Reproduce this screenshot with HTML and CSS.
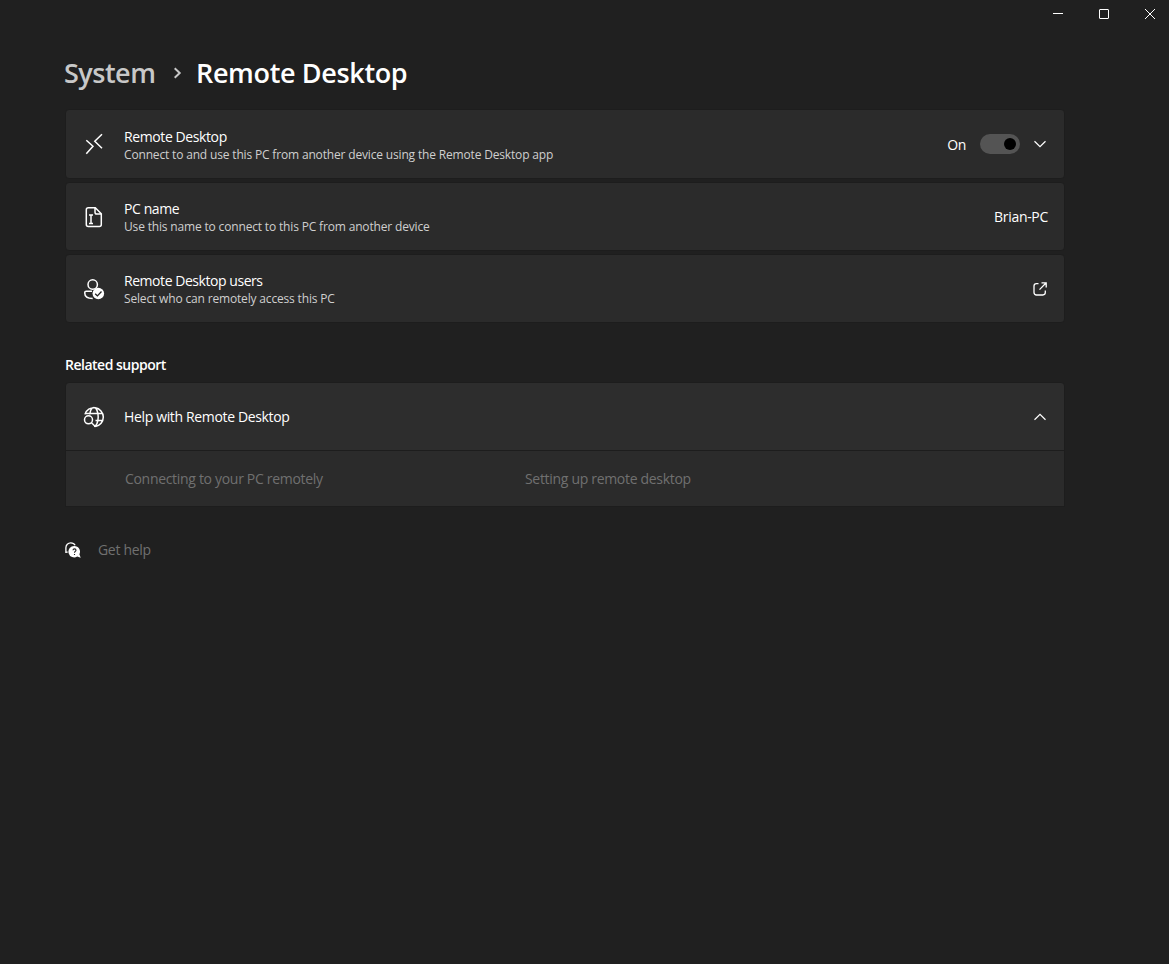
FILE: index.html
```html
<!DOCTYPE html>
<html lang="en">
<head>
<meta charset="utf-8">
<title>Remote Desktop</title>
<link rel="stylesheet" href="styles.css">
</head>
<body>
<header class="titlebar">
  <button class="caption" aria-label="Minimize"><svg width="12" height="12" viewBox="0 0 12 12"><path d="M1 5.5h10"/></svg></button>
  <button class="caption" aria-label="Maximize"><svg width="12" height="12" viewBox="0 0 12 12"><rect x="1.5" y="1.5" width="9" height="9" rx=".5"/></svg></button>
  <button class="caption" aria-label="Close"><svg width="12" height="12" viewBox="0 0 12 12"><path d="M1 1l10 10M11 1L1 11"/></svg></button>
</header>
<main class="page">
  <h1 class="breadcrumb">
    <span class="parent">System</span>
    <svg class="sep" width="10" height="14" viewBox="0 0 10 14"><path d="M2.700 2.200L7.700 7l-5 4.800"/></svg>
    <span class="current">Remote Desktop</span>
  </h1>
  <section class="cards">
    <div class="card tall">
      <svg class="icon" width="24" height="24" viewBox="0 0 24 24"><path d="M4.300 8.200L11 14.300 4.300 21.800M20 2.300L12.800 9.300 20 16.200"/></svg>
      <div class="labels"><div class="title">Remote Desktop</div><div class="desc">Connect to and use this PC from another device using the Remote Desktop app</div></div>
      <span class="state">On</span>
      <span class="toggle"><span class="knob"></span></span>
      <svg class="chevron" width="14" height="14" viewBox="0 0 14 14"><path d="M1.500 4.300L7 9.700l5.500-5.400"/></svg>
    </div>
    <div class="card">
      <svg class="icon" width="24" height="24" viewBox="0 0 24 24"><path d="M6.300 2.700h7l6 6v10.800a2 2 0 0 1-2 2h-11a2 2 0 0 1-2-2V4.700a2 2 0 0 1 2-2zM13 2.900v4.300a1.800 1.800 0 0 0 1.800 1.800h4.300M7 10h4M7 18.500h4M9 10v8.500"/></svg>
      <div class="labels"><div class="title">PC name</div><div class="desc">Use this name to connect to this PC from another device</div></div>
      <span class="value">Brian-PC</span>
    </div>
    <div class="card">
      <svg class="icon" width="24" height="24" viewBox="0 0 24 24"><circle cx="10.700" cy="7.500" r="4.700"/><path d="M10 14.200H4.200c-1 0-1.500.7-1.500 1.600 0 3.600 3.300 5.700 8 5.700"/><circle class="solid" cx="16.300" cy="16.500" r="5.800"/><path class="cut" d="M13.200 16.700l2.200 2.200 4.100-4.400"/></svg>
      <div class="labels"><div class="title users">Remote Desktop users</div><div class="desc">Select who can remotely access this PC</div></div>
      <svg class="open" width="14" height="14" viewBox="0 0 14 14"><path d="M5.500 1.600H3.400A2.400 2.400 0 0 0 1 4v6.600A2.400 2.400 0 0 0 3.400 13h6.500a2.400 2.400 0 0 0 2.400-2.400V8.500M8.500.8h4.700v4.700M13 1L6.500 7.600"/></svg>
    </div>
  </section>
  <h2 class="subhead">Related support</h2>
  <section class="expander">
    <div class="card head">
      <svg class="icon" width="24" height="24" viewBox="0 0 24 24"><path d="M2.900 9.400a9.400 9.400 0 1 1 10.500 12M3.500 8.400h17.200M13.500 15.600h7.200M7.800 9.500c.5-4.200 2.200-6.900 4.200-6.900 2.400 0 4.200 4.200 4.200 9.400s-1.800 9.400-4.200 9.400"/><circle cx="6.500" cy="14.800" r="4"/><path d="M9.500 17.800l4 4"/></svg>
      <div class="labels"><div class="title">Help with Remote Desktop</div></div>
      <svg class="chevron" width="14" height="14" viewBox="0 0 14 14"><path d="M1.500 9.700L7 4.300l5.500 5.400"/></svg>
    </div>
    <div class="links"><a>Connecting to your PC remotely</a><a>Setting up remote desktop</a></div>
  </section>
  <div class="gethelp">
    <svg class="helpicon" width="16" height="16" viewBox="0 0 16 16"><path class="line" d="M.9 11V5.800C.9 2.800 3 .8 5.800.8c2 0 3.500.9 4.300 2.500M.5 10.200h2.200"/><path class="solid" d="M9.400 4a5.700 5.700 0 0 1 5 8.300l1.300 3.400-3.500-1.200A5.700 5.700 0 1 1 9.400 4z"/><path class="cut" d="M8 8.300c0-2 3-1.900 3-.1 0 1.200-1.500 1.200-1.500 2.500M9.500 11.900v1.100"/></svg>
    <a>Get help</a>
  </div>
</main>
</body>
</html>
```
FILE: styles.css
```css
* { box-sizing: border-box; }
body {
  margin: 0;
  min-height: 964px;
  background: #202020;
  color: #fff;
  font: 14px/20px "Open Sans", "Noto Sans", sans-serif;
  letter-spacing: -.31px;
}
svg { display: block; flex: none; fill: none; stroke: #fff; }
.titlebar { display: flex; justify-content: flex-end; height: 28px; margin-right: -4px; }
.caption { width: 46px; padding: 0; border: 0; background: none; display: grid; place-items: center; }
.page { width: 1000px; margin-left: 65px; }
.breadcrumb {
  display: flex; align-items: center; height: 36px; margin: 27px 0 18px;
  font-size: 27px; line-height: 36px; font-weight: 600;
}
.parent { width: 91px; margin-left: -1px; color: #c8c8c8; white-space: nowrap; letter-spacing: -.5px; }
.sep { margin: 0 14px 0 17px; stroke: #c8c8c8; stroke-width: 2; }
.current { white-space: nowrap; letter-spacing: -.35px; }
.cards { display: grid; gap: 3px; }
.card {
  display: flex; align-items: center; height: 69px; padding: 0 16px;
  background: #2b2b2b; border: 1px solid #1d1d1d; border-radius: 4px;
}
.card.tall { height: 70px; }
.icon { margin-right: 18px; stroke-width: 1.5; }
.labels { flex: 1; }
.tall .labels { padding-top: 2px; }
.title, .desc { white-space: nowrap; }
.title { line-height: 19px; letter-spacing: -.4px; }
.title.users { letter-spacing: -.45px; }
.desc { margin-top: 1px; font-size: 12px; line-height: 16px; color: #cfcfcf; letter-spacing: -.165px; }
.solid { fill: #fff; stroke: none; }
.cut { stroke: #222; stroke-width: 1.3; }
.state { margin-right: 14px; padding-top: 1px; }
.toggle { display: flex; align-items: center; justify-content: flex-end; width: 40px; height: 20px; padding: 0 4px; border-radius: 10px; background: #545454; margin-right: 13px; }
.knob { width: 12px; height: 12px; border-radius: 50%; background: #000; }
.chevron { margin-right: 1px; stroke-width: 1.2; }
.open { margin-right: 1px; stroke-width: 1.3; }
.subhead { margin: 32px 0 7px; font-size: 14px; line-height: 20px; font-weight: 600; letter-spacing: -.5px; }
.expander .head { border-radius: 4px 4px 0 0; background: #2d2d2d; }
.head .title { letter-spacing: -.35px; }
.links { display: grid; grid-template-columns: 400px 1fr; align-items: center; height: 56px; padding: 0 59px; border: 1px solid #1d1d1d; border-top: 0; background: #2b2b2b; color: #707070; }
.gethelp { display: flex; align-items: center; gap: 17px; margin-top: 33px; color: #707070; }
.helpicon .line { stroke-width: 1.3; }
.helpicon .cut { stroke-width: 1.1; }
```
